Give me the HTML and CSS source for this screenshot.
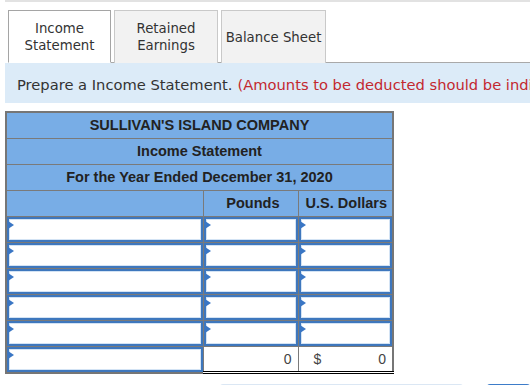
FILE: index.html
```html
<!DOCTYPE html>
<html lang="en">
<head>
  <meta charset="UTF-8" />
  <title>Income Statement</title>
  <link rel="stylesheet" href="styles.css">
</head>
<body>

<div class="topbar"></div>

<div class="tabs">
  <div class="tab active">Income<br>Statement</div>
  <div class="tab">Retained<br>Earnings</div>
  <div class="tab">Balance Sheet</div>
</div>

<div class="banner">
  Prepare a Income Statement. <span class="note">(Amounts to be deducted should be indicated with a minus sign.)</span>
</div>

<table class="sheet">
  <colgroup>
    <col class="c-label">
    <col class="c-amt">
    <col class="c-amt">
  </colgroup>
  <tr class="head"><td colspan="3">SULLIVAN'S ISLAND COMPANY</td></tr>
  <tr class="head"><td colspan="3">Income Statement</td></tr>
  <tr class="head"><td colspan="3">For the Year Ended December 31, 2020</td></tr>
  <tr class="head">
    <td></td>
    <td>Pounds</td>
    <td>U.S. Dollars</td>
  </tr>
  <tr><td class="in"><div class="field"></div></td><td class="in"><div class="field"></div></td><td class="in"><div class="field"></div></td></tr>
  <tr><td class="in"><div class="field"></div></td><td class="in"><div class="field"></div></td><td class="in"><div class="field"></div></td></tr>
  <tr><td class="in"><div class="field"></div></td><td class="in"><div class="field"></div></td><td class="in"><div class="field"></div></td></tr>
  <tr><td class="in"><div class="field"></div></td><td class="in"><div class="field"></div></td><td class="in"><div class="field"></div></td></tr>
  <tr><td class="in"><div class="field"></div></td><td class="in"><div class="field"></div></td><td class="in"><div class="field"></div></td></tr>
  <tr class="total">
    <td class="in"><div class="field"></div></td>
    <td class="sum">0</td>
    <td class="sum"><span class="cur">$</span>0</td>
  </tr>
</table>

<div class="buttons">
  <div class="btn light"></div>
  <div class="btn dark"></div>
</div>

</body>
</html>
```

FILE: styles.css
```css
* { box-sizing: border-box; }

body {
  margin: 0;
  font-family: 'DejaVu Sans', Verdana, sans-serif;
  color: #333;
  background: #fff;
  overflow: hidden;
}

.topbar {
  margin-left: 5px;
  height: 2px;
  background: #e2e2e2;
}

.tabs {
  display: flex;
  gap: 3px;
  margin: 8px 0 0 8px;
  border-bottom: 1px solid #a9a9a9;
}

.tab {
  width: 104px;
  height: 53px;
  display: flex;
  align-items: center;
  justify-content: center;
  text-align: center;
  font-size: 13.3px;
  line-height: 17px;
  background: #f2f2f2;
  border: 1px solid #c9c9c9;
  border-bottom: none;
  margin-bottom: -1px;
}

.tab:first-child { width: 103px; }
.tab:last-child { width: 105px; }

.tab.active {
  background: #fff;
  border-color: #a5a5a5;
  border-bottom: 1px solid #fff;
}

.banner {
  margin-left: 5px;
  height: 40px;
  background: #dcebf8;
  padding: 3px 0 0 12px;
  display: flex;
  align-items: center;
  font-size: 14.7px;
  white-space: nowrap;
  overflow: hidden;
}

.note {
  color: #c3282f;
  margin-left: 5px;
}

.sheet {
  margin: 8px 0 0 5px;
  border-collapse: collapse;
  border: 2px solid #767676;
  font-family: 'Liberation Sans', Arial, sans-serif;
  table-layout: fixed;
  width: 388px;
}

.c-label { width: 197px; }
.c-amt { width: 95px; }

.sheet td {
  border: 1px solid #7a7a7a;
  height: 26px;
  padding: 0;
}

.head td {
  background: #78ade6;
  text-align: center;
  font-weight: bold;
  font-size: 14.5px;
  color: #222;
}

.head td:nth-child(2) {
  text-align: right;
  padding-right: 18px;
}

.head td:nth-child(3) {
  text-align: right;
  padding-right: 5px;
}

.head td[colspan] {
  text-align: center;
  padding: 0;
}

td.in {
  background: #fff;
}

.field {
  position: relative;
  height: 25px;
  border: 2px solid #3e77bd;
  box-shadow: inset 0 0 0 1px #d3e3f4;
  background: #fff;
}

.field::before {
  content: "";
  position: absolute;
  left: -1px;
  top: 2px;
  border-left: 6px solid #3a76c4;
  border-top: 4px solid transparent;
  border-bottom: 4px solid transparent;
}

.total td.sum {
  background: #fff;
  border-top: 1px solid #000;
  border-bottom: 3px double #000;
  text-align: right;
  padding-right: 6px;
  font-size: 14px;
  color: #444;
}

.cur {
  float: left;
  padding-left: 15px;
}

.buttons {
  display: flex;
  margin: 10px 0 0 220px;
  gap: 24px;
}

.btn {
  height: 30px;
  border-radius: 3px;
}

.btn.light {
  width: 243px;
  background: #dbe7f4;
}

.btn.dark {
  flex: 1;
  background: #3d7cc9;
}
```
